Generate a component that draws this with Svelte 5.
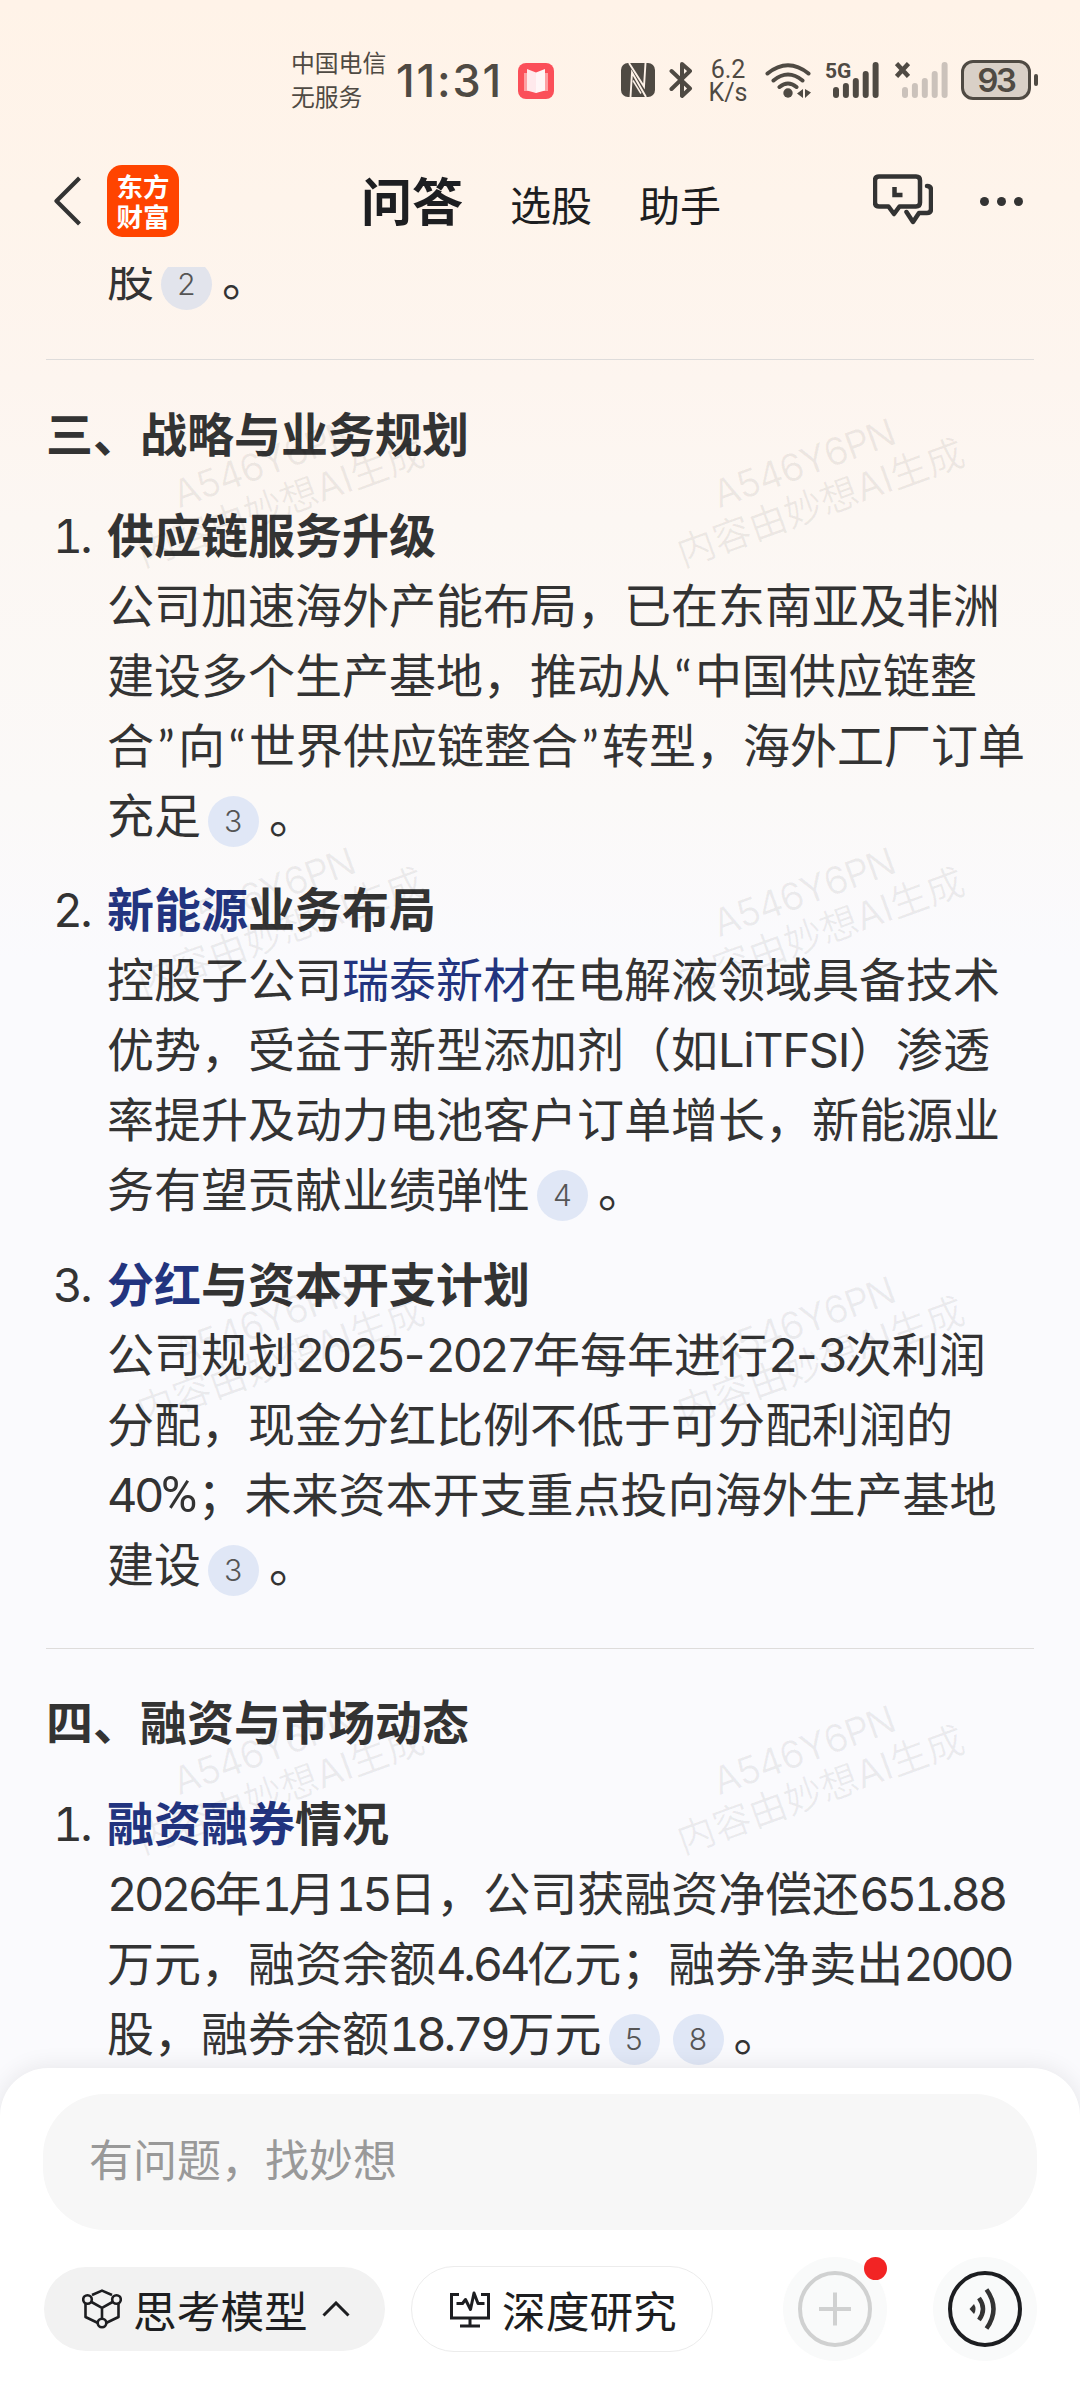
<script lang="ts">
  type Part = { t: string; kind?: 'link' | 'num' | 'dec' | 'dash' | 'abbr' | 'pct' | 'cite' | 'quote' };
  type Item = { title: Part[]; lines: Part[][] };
  type Section = { heading: string; items: Item[] };

  const sections: Section[] = [
    {
      heading: '三、战略与业务规划',
      items: [
        {
          title: [{ t: '供应链服务升级' }],
          lines: [
            [{ t: '公司加速海外产能布局，已在东南亚及非洲' }],
            [{ t: '建设多个生产基地，推动从' }, { t: '“', kind: 'quote' }, { t: '中国供应链整' }],
            [{ t: '合' }, { t: '”', kind: 'quote' }, { t: '向' }, { t: '“', kind: 'quote' }, { t: '世界供应链整合' }, { t: '”', kind: 'quote' }, { t: '转型，海外工厂订单' }],
            [{ t: '充足' }, { t: '3', kind: 'cite' }, { t: '。' }],
          ],
        },
        {
          title: [{ t: '新能源', kind: 'link' }, { t: '业务布局' }],
          lines: [
            [{ t: '控股子公司' }, { t: '瑞泰新材', kind: 'link' }, { t: '在电解液领域具备技术' }],
            [{ t: '优势，受益于新型添加剂（如' }, { t: 'LiTFSI', kind: 'abbr' }, { t: '）渗透' }],
            [{ t: '率提升及动力电池客户订单增长，新能源业' }],
            [{ t: '务有望贡献业绩弹性' }, { t: '4', kind: 'cite' }, { t: '。' }],
          ],
        },
        {
          title: [{ t: '分红', kind: 'link' }, { t: '与资本开支计划' }],
          lines: [
            [
              { t: '公司规划' }, { t: '2025', kind: 'num' }, { t: '-', kind: 'dash' }, { t: '2027', kind: 'num' },
              { t: '年每年进行' }, { t: '2', kind: 'num' }, { t: '-', kind: 'dash' }, { t: '3', kind: 'num' }, { t: '次利润' },
            ],
            [{ t: '分配，现金分红比例不低于可分配利润的' }],
            [{ t: '40', kind: 'num' }, { t: '%', kind: 'pct' }, { t: '；未来资本开支重点投向海外生产基地' }],
            [{ t: '建设' }, { t: '3', kind: 'cite' }, { t: '。' }],
          ],
        },
      ],
    },
    {
      heading: '四、融资与市场动态',
      items: [
        {
          title: [{ t: '融资融券', kind: 'link' }, { t: '情况' }],
          lines: [
            [{ t: '2026', kind: 'num' }, { t: '年' }, { t: '1', kind: 'num' }, { t: '月' }, { t: '15', kind: 'num' }, { t: '日，公司获融资净偿还' }, { t: '651.88', kind: 'dec' }],
            [{ t: '万元，融资余额' }, { t: '4.64', kind: 'dec' }, { t: '亿元；融券净卖出' }, { t: '2000', kind: 'num' }],
            [{ t: '股，融券余额' }, { t: '18.79', kind: 'dec' }, { t: '万元' }, { t: '5', kind: 'cite' }, { t: '8', kind: 'cite' }, { t: '。' }],
          ],
        },
      ],
    },
  ];

  // watermark tiles repeat every 429px down the page, two across
  const marks = [0, 1, 2, 3].flatMap((r) => [0, 1].map((c) => ({ x: 122 + c * 540, y: 440 + r * 429 })));
  const bars = [11, 15, 20, 27, 36];
</script>

{#snippet parts(list: Part[])}
  {#each list as p}<span class={p.kind ?? 'plain'}>{p.t}</span>{/each}
{/snippet}

{#snippet signal()}
  <svg width="46" height="36" viewBox="0 0 46 36" fill="currentColor">
    {#each bars as h, i}
      <rect x={i * 9.9} y={36 - h} width="6" height={h} rx="3" />
    {/each}
  </svg>
{/snippet}

<div class="screen">
  <div class="marks" aria-hidden="true">
    {#each marks as m}
      <div class="mark" style="left: {m.x}px; top: {m.y}px">
        <div class="code">A546Y6PN</div>
        <div>内容由妙想AI生成</div>
      </div>
    {/each}
  </div>

  <header class="status">
    <div class="carrier"><span>中国电信</span><span>无服务</span></div>
    <div class="time">11:31</div>
    <svg class="book" width="36" height="36" viewBox="0 0 36 36">
      <rect width="36" height="36" rx="8" fill="#fb4f59" />
      <path d="M6 10h24v18H21l-3 2-3-2H6z" fill="#fda0a4" />
      <path d="M9 6l9 3.500v20.500l-9-2.500z" fill="#ffe9ec" />
      <path d="M27 6l-9 3.500v20.500l9-2.500z" fill="#fff6f7" />
    </svg>
    <svg class="nfc" width="34" height="34" viewBox="0 0 34 34">
      <rect width="34" height="34" rx="7" fill="#4f4a43" />
      <path d="M9.500 34L11 9.500 25 34" fill="none" stroke="#fef2e8" stroke-width="1.900" />
      <path d="M8 0L23 23.500 24.500 0" fill="none" stroke="#fef2e8" stroke-width="1.900" />
      <path d="M12 17.500L20 30.500" stroke="#fef2e8" stroke-width="1.500" />
    </svg>
    <svg class="bt" width="24" height="38" viewBox="0 0 24 38" fill="none" stroke="#4f4a43" stroke-width="4" stroke-linejoin="round" stroke-linecap="round">
      <path d="M2.500 10L21 27.500 13 35V3L21 10 2.500 28" />
    </svg>
    <div class="speed"><span>6.2</span><span>K/s</span></div>
    <svg class="wifi" width="47" height="36" viewBox="0 0 47 36" fill="none" stroke="#4f4a43" stroke-width="4" stroke-linecap="round">
      <path d="M2.500 11.500Q23 -5 43.500 11.500M8.500 18.500Q23 6.500 37.500 18.500M14.500 25Q23 18 31.500 25" />
      <circle cx="23" cy="31" r="4.700" fill="#4f4a43" stroke="none" />
      <path d="M38 27v9l-6-4.500zM40 27v9l6-5.500z" fill="#4f4a43" stroke="none" />
    </svg>
    <div class="cell">
      {@render signal()}
      <b>5G</b>
    </div>
    <div class="cell off">
      {@render signal()}
      <svg class="cross" width="15" height="16" viewBox="0 0 15 16" stroke="#4f4a43" stroke-width="4.500">
        <path d="M1.500 1.500l12 13M13.500 1.500l-12 13" />
      </svg>
    </div>
    <div class="battery">93</div>
    <i class="cap"></i>
  </header>

  <nav class="nav">
    <svg class="back" width="28" height="50" viewBox="0 0 28 50" fill="none" stroke="#333" stroke-width="4.200" stroke-linejoin="round">
      <path d="M25.500 2L2.500 25l23 23" />
    </svg>
    <div class="logo"><span>东方</span><span>财富</span></div>
    <div class="tabs">
      <b>问答</b>
      <span>选股</span>
      <span>助手</span>
    </div>
    <svg class="chat" width="60" height="52" viewBox="0 0 60 52" fill="none" stroke="#333" stroke-width="4.500" stroke-linejoin="round" stroke-linecap="round">
      <path d="M6 2.500h37q4 0 4 4v22q0 4-4 4H26.500L21 40l-5.500-7.500H6q-4 0-4-4v-22q0-4 4-4z" />
      <path d="M54 12q4 0 4 4v19q0 4-4 4H46l-6 9-6.500-10" />
      <path d="M21.500 13v8h8" stroke-linecap="butt" stroke-linejoin="miter" />
    </svg>
    <div class="more"><i></i><i></i><i></i></div>
  </nav>

  <main class="answer">
    <div class="line cut">{@render parts([{ t: '股' }, { t: '2', kind: 'cite' }, { t: '。' }])}</div>
    {#each sections as s}
      <hr />
      <h2>{s.heading}</h2>
      {#each s.items as item, i}
        <section class="item">
          <span class="index">{i + 1}.</span>
          <div>
            <h3>{@render parts(item.title)}</h3>
            {#each item.lines as l}
              <div class="line">{@render parts(l)}</div>
            {/each}
          </div>
        </section>
      {/each}
    {/each}
  </main>

  <footer class="dock">
    <div class="ask">有问题，找妙想</div>
    <div class="tools">
      <div class="chip solid">
        <svg width="40" height="40" viewBox="0 0 40 40" fill="none" stroke="#1d1e21" stroke-width="2.600" stroke-linejoin="round">
          <path d="M10 6L20 1.600 30 6M3.500 14.500V28L16 34M36.500 14.500V28L24 34M9.500 13L20 18.800 30.500 13M20 18.800V30" />
          <circle cx="5.500" cy="10.500" r="4.300" />
          <circle cx="34.500" cy="10.500" r="4.300" />
          <circle cx="20" cy="34" r="4.300" />
        </svg>
        <span>思考模型</span>
        <svg class="caret" width="28" height="16" viewBox="0 0 28 16" fill="none" stroke="#1d1e21" stroke-width="3"><path d="M1.500 14.500L14 2l12.500 12.500" /></svg>
      </div>
      <div class="chip">
        <svg width="42" height="38" viewBox="0 0 42 38" fill="none" stroke="#1d1e21" stroke-width="3">
          <path d="M10 4.500H2.500V28h37V4.500H32M21 28v8M11 36h20" />
          <path d="M7.500 13.500h6l3-4 5 10L25 3l4 10.500h6.500" stroke-linejoin="round" />
        </svg>
        <span>深度研究</span>
      </div>
      <div class="round add">
        <svg width="74" height="76" viewBox="0 0 74 76" fill="none" stroke="#d0d1d1" stroke-width="4">
          <ellipse cx="37" cy="38" rx="35" ry="36" />
          <path d="M37 21.500v33M21 38h32" />
        </svg>
        <i class="dot"></i>
      </div>
      <div class="round voice">
        <svg width="74" height="76" viewBox="0 0 74 76" fill="none" stroke="#1d1e21" stroke-width="4">
          <ellipse cx="37" cy="38" rx="35" ry="36" />
          <path d="M21.500 38l4.500-5q3 5 0 10z" fill="#333" stroke="none" />
          <path d="M31 27q8 11 0 22M38.500 18.500q14 19.500 0 39" stroke="#333" stroke-width="4.500" />
        </svg>
      </div>
    </div>
  </footer>
</div>

<style>
  :global(body) {
    background: #fafafc;
  }

  .screen {
    position: relative;
    width: 1080px;
    height: 2400px;
    overflow: hidden;
    display: flex;
    flex-direction: column;
    background: linear-gradient(#fff3e8 0, #fef4eb 200px, #fdf5ef 380px, #fcf7f3 520px, #fbf9f8 800px, #fafafd 960px, #fafafd 100%);
    color: #333;
    font-family: Inter, 'Noto Sans CJK SC', sans-serif;
    font-feature-settings: 'tnum';
  }

  .mark {
    position: absolute;
    width: 300px;
    transform: rotate(-20deg);
    font-size: 38px;
    line-height: 43px;
    color: rgba(0, 0, 0, 0.06);
    text-align: center;
    white-space: nowrap;
  }

  .code {
    padding-right: 3px;
    letter-spacing: -1.700px;
  }

  .status {
    display: flex;
    height: 138px;
    flex: none;
    padding: 0 42px 0 291px;
    box-sizing: border-box;
    color: #4f4a43;
    align-items: flex-start;
  }

  .status > * {
    flex: none;
  }

  .carrier {
    display: flex;
    flex-direction: column;
    width: 105px;
    margin-top: 47px;
    font-size: 23.800px;
    line-height: 34px;
  }

  .time {
    width: 122px;
    margin-top: 51px;
    font-size: 45px;
    font-weight: 500;
    line-height: 60px;
    font-feature-settings: normal;
    letter-spacing: 1.800px;
  }

  .book {
    margin-top: 63px;
  }

  .nfc {
    margin: 63px 0 0 67px;
  }

  .bt {
    margin: 61px 0 0 14px;
  }

  .speed {
    display: flex;
    flex-direction: column;
    align-items: center;
    width: 40px;
    margin: 58px 0 0 15px;
    font: 25px/23px Roboto, sans-serif;
  }

  .wifi {
    margin: 62px 0 0 17px;
  }

  .cell {
    position: relative;
    width: 48px;
    margin: 62px 0 0 21px;
  }

  .cell b {
    position: absolute;
    left: -8px;
    top: -1px;
    font: 700 21px/21px Roboto, sans-serif;
  }

  .cell.off svg:first-child {
    color: #cbc2bb;
  }

  .cell .cross {
    position: absolute;
    left: -7px;
    top: 0;
  }

  .battery {
    width: 70px;
    height: 40px;
    margin: 60px 0 0 11px;
    box-sizing: border-box;
    border: 3px solid #4f4a43;
    border-radius: 12px;
    background: #d9d0c7;
    font-size: 33px;
    line-height: 35px;
    font-weight: 600;
    letter-spacing: -2.500px;
    text-align: center;
  }

  .cap {
    width: 4px;
    height: 12px;
    margin: 74px 0 0 3px;
    border-radius: 2px;
    background: #4f4a43;
  }

  .nav {
    display: flex;
    height: 129px;
    flex: none;
    align-items: flex-start;
  }

  .nav > * {
    flex: none;
  }

  .back {
    margin: 38px 0 0 54px;
  }

  .logo {
    display: flex;
    flex-direction: column;
    align-items: center;
    justify-content: center;
    width: 72px;
    height: 72px;
    margin: 27px 0 0 25px;
    border-radius: 15px;
    background: #ff4400;
    color: #fff;
    font: 700 26.500px/30px 'Noto Sans CJK SC', sans-serif;
  }

  .tabs {
    display: flex;
    gap: 47px;
    width: 512px;
    margin: 30px 0 0 182px;
    color: #1d1e21;
    font-size: 41px;
    line-height: 76px;
  }

  .tabs b {
    font-size: 51px;
    line-height: 70px;
  }

  .chat {
    margin: 36px 0 0;
  }

  .more {
    display: flex;
    gap: 8px;
    margin: 59px 0 0 47px;
  }

  .more i {
    width: 9px;
    height: 9px;
    border-radius: 50%;
    background: #333;
  }

  .answer {
    flex: 1;
    min-height: 0;
    overflow: hidden;
    padding: 0 46px;
  }

  .line,
  h2,
  h3 {
    height: 70px;
    margin: 0;
    font-size: 47px;
    line-height: 70px;
    white-space: nowrap;
  }

  h2,
  h3 {
    font-weight: 700;
  }

  .cut {
    height: 67px;
    margin: -23px 0 0 61px;
  }

  hr {
    height: 1px;
    margin: 48px 0 39.500px;
    border: 0;
    background: #dedcdb;
  }

  h2 {
    margin-bottom: 31px;
  }

  .item {
    display: flex;
    margin-bottom: 24.500px;
  }

  .index {
    width: 61px;
    padding-left: 7px;
    box-sizing: border-box;
    flex: none;
    font-size: 46px;
    line-height: 70px;
    letter-spacing: -2.500px;
  }

  .link {
    color: #22347f;
  }

  .num {
    letter-spacing: -3.600px;
  }

  .dec {
    letter-spacing: -3.200px;
  }

  .dash {
    display: inline-block;
    width: 22px;
    margin-left: 1px;
    font-feature-settings: normal;
    text-align: center;
  }

  .abbr {
    letter-spacing: -1.300px;
  }

  .pct {
    font-family: Roboto, sans-serif;
    font-size: 50px;
    line-height: 0;
  }

  .cite {
    display: inline-block;
    width: 51px;
    height: 51px;
    margin: 0 6px 0 7px;
    border-radius: 50%;
    background: #e0e7f6;
    color: #555;
    font-size: 30px;
    font-weight: 300;
    line-height: 51px;
    text-align: center;
    vertical-align: 1px;
  }

  .cut .cite {
    background: #e2e4ec;
  }

  .cite + .plain {
    margin-left: 4px;
  }

  .quote {
    display: inline-block;
    width: 24px;
    height: 70px;
    vertical-align: top;
    font-family: Lato, sans-serif;
    text-align: center;
  }

  .dock {
    height: 332px;
    flex: none;
    box-sizing: border-box;
    padding: 26px 43px 0;
    border-radius: 48px 48px 0 0;
    background: #fff;
    box-shadow: 0 0 24px rgba(0, 0, 0, 0.09);
    position: relative;
  }

  .ask {
    height: 136px;
    padding-left: 46px;
    border-radius: 62px;
    background: #f7f7f7;
    color: #999;
    font-size: 44px;
    line-height: 134px;
  }

  .tools {
    display: flex;
    align-items: center;
    margin-top: 27px;
    color: #1d1e21;
    font-size: 43.700px;
  }

  .chip {
    display: flex;
    align-items: center;
    width: 302px;
    height: 86px;
    padding-left: 37px;
    box-sizing: border-box;
    border: 1px solid #ececec;
    border-radius: 43px;
    gap: 11px;
    white-space: nowrap;
  }

  .chip.solid {
    width: 341px;
    height: 84px;
    margin: 0 26px 0 1px;
    padding-left: 38px;
    border: 0;
    background: #f2f2f2;
  }

  .caret {
    margin-left: 3px;
  }

  .round {
    position: relative;
    display: grid;
    place-items: center;
    width: 104px;
    height: 104px;
    border-radius: 50%;
    background: #f9fafa;
  }

  .add {
    margin: 0 46px 0 70px;
  }

  .dot {
    position: absolute;
    left: 81px;
    top: 0;
    width: 23px;
    height: 23px;
    border-radius: 50%;
    background: #f22424;
  }
</style>
